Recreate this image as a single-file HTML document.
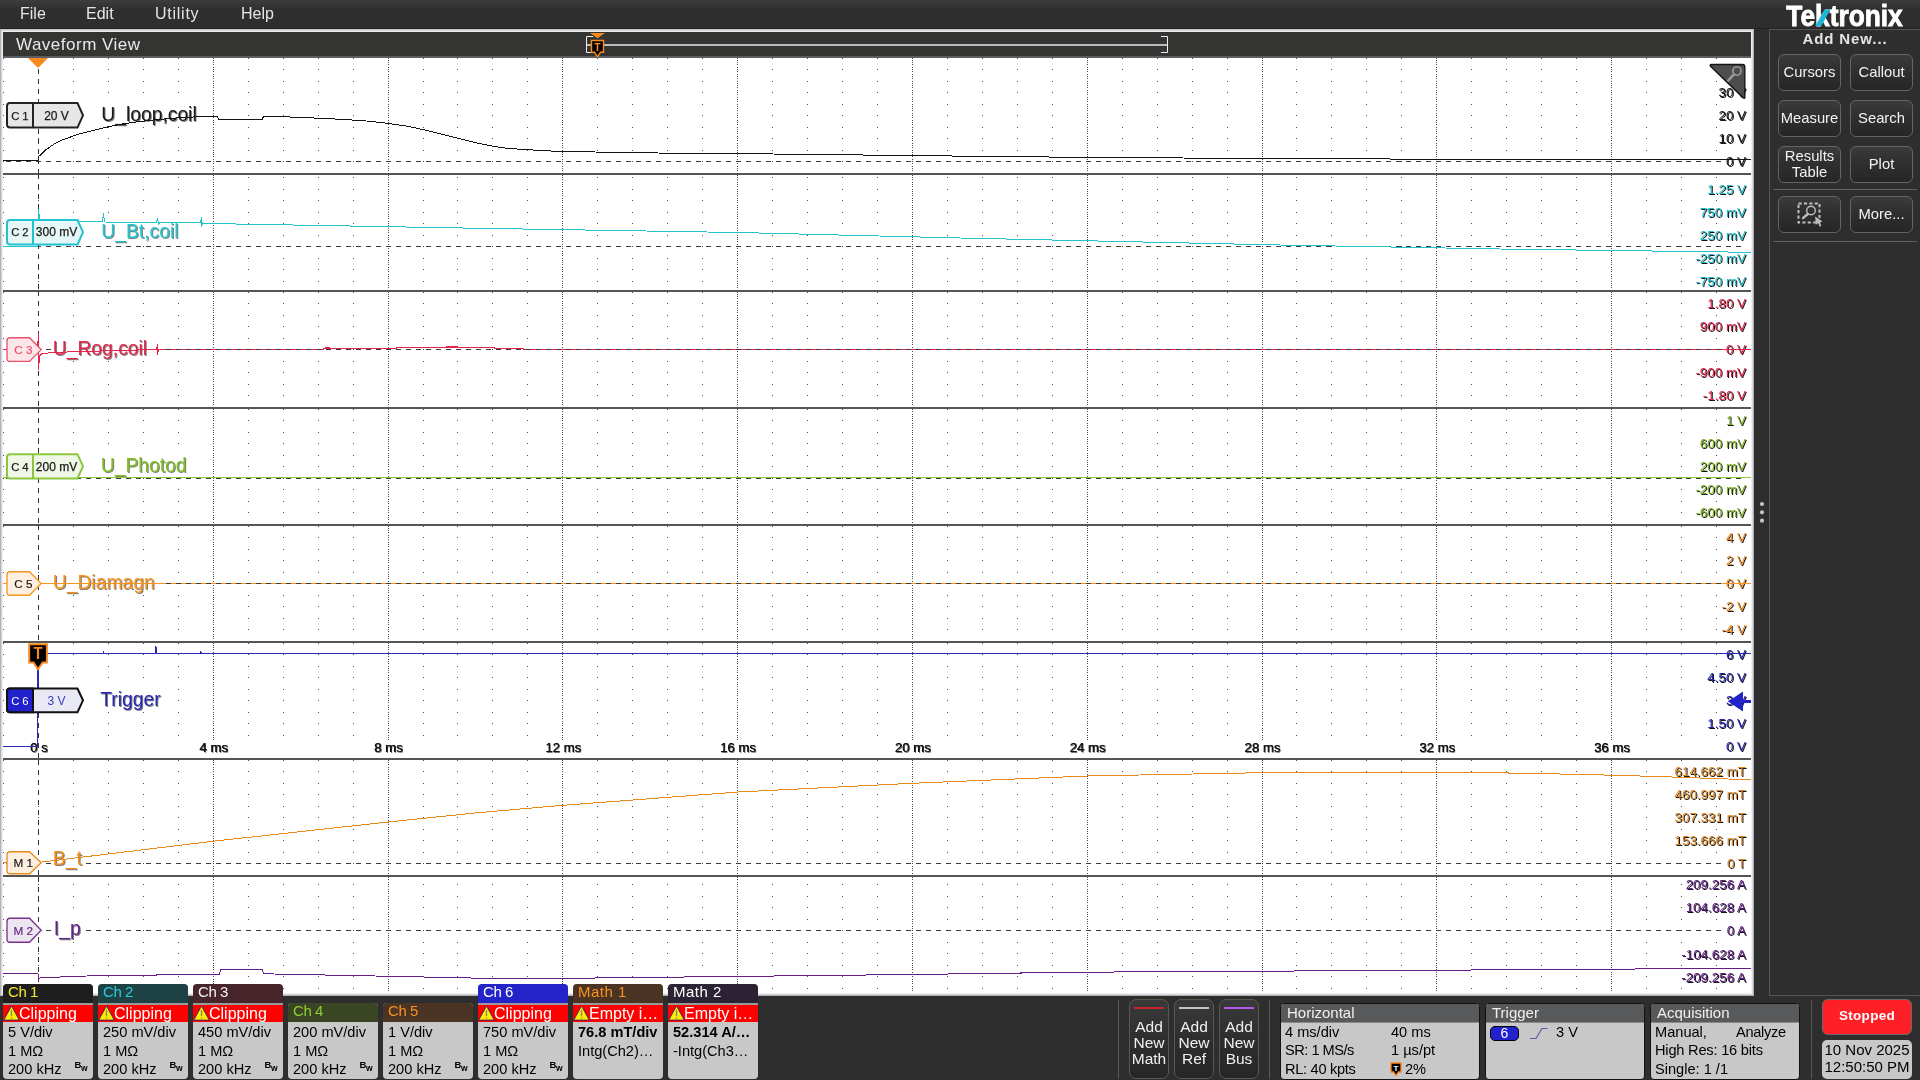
<!DOCTYPE html>
<html lang="en"><head><meta charset="utf-8"><title>Tektronix Waveform View</title>
<style>
*{box-sizing:border-box}
html,body{margin:0;padding:0}
body{width:1920px;height:1080px;overflow:hidden;background:#2e2e2e;position:relative;
 font-family:"Liberation Sans",sans-serif;color:#000}
#root{position:absolute;left:0;top:0;width:1920px;height:1080px;will-change:transform}
.abs{position:absolute}
#menubar{left:0;top:0;width:1920px;height:29px;background:linear-gradient(#3d3d3d 0,#2e2e2e 10px,#2e2e2e 28px,#222 28px)}
#menubar span{position:absolute;top:5px;font-size:16px;line-height:18px;color:#e6e6e6}
#wv{left:0;top:29px;width:1754px;height:967px;background:#fff;
 border:1px solid #b2b2b6;border-top-color:#c6c6ca;box-shadow:inset 0 0 0 1px #d8d8dc,inset 0 0 0 2px #efeff2}
#wvedge{display:none}
#title{left:3px;top:32px;width:1748px;height:26px;background:#343432;border-bottom:2px solid #5a5d61}
#title span{position:absolute;left:13px;top:3px;font-size:17px;line-height:19px;color:#e8e8e8;letter-spacing:.5px}
#side{left:1769px;top:29px;width:151px;height:967px;border:1px solid #5b5450;border-right:none}
#addnew{left:1770px;top:30px;width:150px;text-align:center;font-size:15px;line-height:18px;font-weight:bold;color:#e4e4e4;letter-spacing:.9px}
.btn{position:absolute;width:63px;height:37px;padding-bottom:1px;border:1px solid #6b625c;border-radius:6px;
 background:linear-gradient(#3b3b3b 0,#303030 40%,#262626 100%);color:#f2f2f2;font-size:14.8px;
 display:flex;align-items:center;justify-content:center;text-align:center;line-height:16px;white-space:nowrap}
.hr{position:absolute;left:1773px;width:144px;height:1px;background:#6a605a}
.vr{position:absolute;width:1px;top:1000px;height:79px;background:#5f5650}
svg{position:absolute;left:0;top:0}
.lbl{position:absolute;font-size:13.4px;line-height:14px;white-space:nowrap;text-align:right;right:174px;
 text-shadow:1px 1px 0 #151515;background:#fff;padding:0 1px 0 2px;margin-right:-1px}
.tl{position:absolute;font-size:13.2px;line-height:16px;white-space:nowrap;color:#111;transform:translateX(-50%);top:740px;padding:0 1px;
 background:#fff;text-shadow:.6px 0 0 #222,.9px .9px 0 #777}
.wl{position:absolute;font-size:19.3px;line-height:22px;white-space:nowrap;text-shadow:1px 1px 0 rgba(0,0,0,.5);background:#fff;padding:0 2px;margin-left:-2px}
/* bottom badges */
.cb{position:absolute;width:90px;border-radius:4px 4px 4px 4px;overflow:hidden;background:#c8c8c8;font-size:14.6px;line-height:18.7px}
.cb .h{height:19px;padding-left:5px;font-size:15px;line-height:16px;white-space:nowrap;letter-spacing:-.45px}
.cb .sep{height:2px;background:#9a9a9a}
.cb .w{height:17px;background:#ff0000;color:#fff;font-size:16px;line-height:17px;padding-left:16px;white-space:nowrap;position:relative}
.cb .b{padding:1px 0 0 5px;white-space:nowrap;position:relative}
.cb .bw{position:absolute;right:6px;bottom:9px;letter-spacing:-.5px;font-size:9.5px;line-height:10px;font-weight:bold}
.cb .bw sub{font-size:8.5px;vertical-align:-3px;line-height:0}
.box{position:absolute;top:1003px;height:77px;border:1px solid #111;border-radius:4px;background:#c8c8c8;overflow:hidden;font-size:14.6px;line-height:18.8px}
.box .h{height:19px;background:#58595b;color:#f0f0f0;font-size:15px;line-height:17px;padding-left:6px;border-bottom:1px solid #8a8a8a}
.box .r{position:absolute;white-space:nowrap}
.abtn{position:absolute;top:999px;width:40px;height:80px;border:1px solid #5f5650;border-radius:7px;
 background:linear-gradient(#3a3a3a 0,#2e2e2e 50%,#262626 100%);color:#f0f0f0;font-size:15.5px;line-height:16.1px;text-align:center;padding-top:19px}
.abtn i{position:absolute;left:4px;right:4px;top:7px;height:2px}
</style></head>
<body>
<div id="root">
<div class="abs" id="menubar"><span style="left:20px">File</span><span style="left:86px">Edit</span><span style="left:155px;letter-spacing:.75px">Utility</span><span style="left:241px">Help</span></div>
<div class="abs" id="wv"></div><div class="abs" id="wvedge"></div>
<div class="abs" id="title"><span>Waveform View</span></div>
<div class="abs" id="side"></div>
<div class="abs" id="addnew">Add New...</div>
<div class="btn" style="left:1778px;top:54px">Cursors</div>
<div class="btn" style="left:1850px;top:54px">Callout</div>
<div class="btn" style="left:1778px;top:100px">Measure</div>
<div class="btn" style="left:1850px;top:100px">Search</div>
<div class="btn" style="left:1778px;top:146px">Results<br>Table</div>
<div class="btn" style="left:1850px;top:146px">Plot</div>
<div class="btn" style="left:1778px;top:196px"></div>
<div class="btn" style="left:1850px;top:196px">More...</div>
<div class="hr" style="top:189px"></div><div class="hr" style="top:241px"></div>
<svg width="1920" height="1080" viewBox="0 0 1920 1080" font-family="Liberation Sans, sans-serif">
<defs>
<path id="row" d="M3 .5h1M38 .5h1M73 .5h1M108 .5h1M143 .5h1M178 .5h1M213 .5h1M248 .5h1M283 .5h1M318 .5h1M353 .5h1M388 .5h1M423 .5h1M457 .5h1M492 .5h1M527 .5h1M562 .5h1M597 .5h1M632 .5h1M667 .5h1M702 .5h1M737 .5h1M772 .5h1M807 .5h1M842 .5h1M877 .5h1M912 .5h1M947 .5h1M982 .5h1M1017 .5h1M1052 .5h1M1087 .5h1M1122 .5h1M1157 .5h1M1192 .5h1M1227 .5h1M1262 .5h1M1296 .5h1M1331 .5h1M1366 .5h1M1401 .5h1M1436 .5h1M1471 .5h1M1506 .5h1M1541 .5h1M1576 .5h1M1611 .5h1M1646 .5h1M1681 .5h1M1716 .5h1" stroke="#4a4a4a" stroke-width="1" fill="none" shape-rendering="crispEdges"/>
<path id="v0" d="M.5 58v1M.5 60v1M.5 62v1M.5 64v1M.5 67v1M.5 69v1M.5 71v1M.5 74v1M.5 76v1M.5 78v1M.5 81v1M.5 83v1M.5 85v1M.5 87v1M.5 90v1M.5 92v1M.5 94v1M.5 97v1M.5 99v1M.5 101v1M.5 104v1M.5 106v1M.5 108v1M.5 110v1M.5 113v1M.5 115v1M.5 117v1M.5 120v1M.5 122v1M.5 124v1M.5 127v1M.5 129v1M.5 131v1M.5 133v1M.5 136v1M.5 138v1M.5 140v1M.5 143v1M.5 145v1M.5 147v1M.5 150v1M.5 152v1M.5 154v1M.5 156v1M.5 159v1M.5 161v1M.5 163v1M.5 166v1M.5 168v1M.5 170v1" stroke="#4a4a4a" stroke-width="1" fill="none" shape-rendering="crispEdges"/>
<path id="v1" d="M.5 175v1M.5 177v1M.5 179v1M.5 182v1M.5 184v1M.5 186v1M.5 189v1M.5 191v1M.5 193v1M.5 195v1M.5 198v1M.5 200v1M.5 202v1M.5 205v1M.5 207v1M.5 209v1M.5 212v1M.5 214v1M.5 216v1M.5 218v1M.5 221v1M.5 223v1M.5 225v1M.5 228v1M.5 230v1M.5 232v1M.5 235v1M.5 237v1M.5 239v1M.5 241v1M.5 244v1M.5 246v1M.5 248v1M.5 251v1M.5 253v1M.5 255v1M.5 258v1M.5 260v1M.5 262v1M.5 264v1M.5 267v1M.5 269v1M.5 271v1M.5 274v1M.5 276v1M.5 278v1M.5 281v1M.5 283v1M.5 285v1M.5 287v1" stroke="#4a4a4a" stroke-width="1" fill="none" shape-rendering="crispEdges"/>
<path id="v2" d="M.5 292v1M.5 294v1M.5 296v1M.5 298v1M.5 301v1M.5 303v1M.5 305v1M.5 308v1M.5 310v1M.5 312v1M.5 315v1M.5 317v1M.5 319v1M.5 321v1M.5 324v1M.5 326v1M.5 328v1M.5 331v1M.5 333v1M.5 335v1M.5 338v1M.5 340v1M.5 342v1M.5 344v1M.5 347v1M.5 349v1M.5 351v1M.5 354v1M.5 356v1M.5 358v1M.5 361v1M.5 363v1M.5 365v1M.5 367v1M.5 370v1M.5 372v1M.5 374v1M.5 377v1M.5 379v1M.5 381v1M.5 384v1M.5 386v1M.5 388v1M.5 390v1M.5 393v1M.5 395v1M.5 397v1M.5 400v1M.5 402v1M.5 404v1" stroke="#4a4a4a" stroke-width="1" fill="none" shape-rendering="crispEdges"/>
<path id="v3" d="M.5 409v1M.5 411v1M.5 414v1M.5 416v1M.5 418v1M.5 420v1M.5 423v1M.5 425v1M.5 427v1M.5 430v1M.5 432v1M.5 434v1M.5 437v1M.5 439v1M.5 441v1M.5 443v1M.5 446v1M.5 448v1M.5 450v1M.5 453v1M.5 455v1M.5 457v1M.5 460v1M.5 462v1M.5 464v1M.5 466v1M.5 469v1M.5 471v1M.5 473v1M.5 476v1M.5 478v1M.5 480v1M.5 483v1M.5 485v1M.5 487v1M.5 489v1M.5 492v1M.5 494v1M.5 496v1M.5 499v1M.5 501v1M.5 503v1M.5 506v1M.5 508v1M.5 510v1M.5 512v1M.5 515v1M.5 517v1M.5 519v1M.5 522v1" stroke="#4a4a4a" stroke-width="1" fill="none" shape-rendering="crispEdges"/>
<path id="v4" d="M.5 526v1M.5 528v1M.5 530v1M.5 532v1M.5 535v1M.5 537v1M.5 539v1M.5 542v1M.5 544v1M.5 546v1M.5 549v1M.5 551v1M.5 553v1M.5 555v1M.5 558v1M.5 560v1M.5 562v1M.5 565v1M.5 567v1M.5 569v1M.5 572v1M.5 574v1M.5 576v1M.5 578v1M.5 581v1M.5 583v1M.5 585v1M.5 588v1M.5 590v1M.5 592v1M.5 595v1M.5 597v1M.5 599v1M.5 601v1M.5 604v1M.5 606v1M.5 608v1M.5 611v1M.5 613v1M.5 615v1M.5 618v1M.5 620v1M.5 622v1M.5 624v1M.5 627v1M.5 629v1M.5 631v1M.5 634v1M.5 636v1M.5 638v1" stroke="#4a4a4a" stroke-width="1" fill="none" shape-rendering="crispEdges"/>
<path id="v5" d="M.5 643v1M.5 645v1M.5 647v1M.5 649v1M.5 652v1M.5 654v1M.5 656v1M.5 659v1M.5 661v1M.5 663v1M.5 666v1M.5 668v1M.5 670v1M.5 672v1M.5 675v1M.5 677v1M.5 679v1M.5 682v1M.5 684v1M.5 686v1M.5 689v1M.5 691v1M.5 693v1M.5 695v1M.5 698v1M.5 700v1M.5 702v1M.5 705v1M.5 707v1M.5 709v1M.5 712v1M.5 714v1M.5 716v1M.5 718v1M.5 721v1M.5 723v1M.5 725v1M.5 728v1M.5 730v1M.5 732v1M.5 735v1M.5 737v1M.5 739v1M.5 741v1M.5 744v1M.5 746v1M.5 748v1M.5 751v1M.5 753v1M.5 755v1" stroke="#4a4a4a" stroke-width="1" fill="none" shape-rendering="crispEdges"/>
<path id="v6" d="M.5 760v1M.5 762v1M.5 764v1M.5 767v1M.5 769v1M.5 771v1M.5 774v1M.5 776v1M.5 778v1M.5 781v1M.5 783v1M.5 785v1M.5 787v1M.5 790v1M.5 792v1M.5 794v1M.5 797v1M.5 799v1M.5 801v1M.5 804v1M.5 806v1M.5 808v1M.5 810v1M.5 813v1M.5 815v1M.5 817v1M.5 820v1M.5 822v1M.5 824v1M.5 827v1M.5 829v1M.5 831v1M.5 833v1M.5 836v1M.5 838v1M.5 840v1M.5 843v1M.5 845v1M.5 847v1M.5 850v1M.5 852v1M.5 854v1M.5 856v1M.5 859v1M.5 861v1M.5 863v1M.5 866v1M.5 868v1M.5 870v1M.5 873v1" stroke="#4a4a4a" stroke-width="1" fill="none" shape-rendering="crispEdges"/>
<path id="v7" d="M.5 877v1M.5 879v1M.5 882v1M.5 884v1M.5 886v1M.5 889v1M.5 891v1M.5 893v1M.5 896v1M.5 898v1M.5 900v1M.5 902v1M.5 905v1M.5 907v1M.5 909v1M.5 912v1M.5 914v1M.5 916v1M.5 919v1M.5 921v1M.5 923v1M.5 926v1M.5 928v1M.5 930v1M.5 933v1M.5 935v1M.5 937v1M.5 939v1M.5 942v1M.5 944v1M.5 946v1M.5 949v1M.5 951v1M.5 953v1M.5 956v1M.5 958v1M.5 960v1M.5 963v1M.5 965v1M.5 967v1M.5 969v1M.5 972v1M.5 974v1M.5 976v1M.5 979v1M.5 981v1M.5 983v1M.5 986v1M.5 988v1M.5 990v1" stroke="#4a4a4a" stroke-width="1" fill="none" shape-rendering="crispEdges"/>
</defs>
<g><use href="#row" y="58"/><use href="#row" y="69"/><use href="#row" y="81"/><use href="#row" y="92"/><use href="#row" y="104"/><use href="#row" y="115"/><use href="#row" y="127"/><use href="#row" y="138"/><use href="#row" y="150"/><use href="#row" y="161"/><use href="#v0" x="213"/><use href="#v0" x="388"/><use href="#v0" x="562"/><use href="#v0" x="737"/><use href="#v0" x="912"/><use href="#v0" x="1087"/><use href="#v0" x="1262"/><use href="#v0" x="1436"/><use href="#v0" x="1611"/><use href="#row" y="177"/><use href="#row" y="189"/><use href="#row" y="200"/><use href="#row" y="212"/><use href="#row" y="223"/><use href="#row" y="235"/><use href="#row" y="246"/><use href="#row" y="258"/><use href="#row" y="269"/><use href="#row" y="281"/><use href="#v1" x="213"/><use href="#v1" x="388"/><use href="#v1" x="562"/><use href="#v1" x="737"/><use href="#v1" x="912"/><use href="#v1" x="1087"/><use href="#v1" x="1262"/><use href="#v1" x="1436"/><use href="#v1" x="1611"/><use href="#row" y="292"/><use href="#row" y="303"/><use href="#row" y="315"/><use href="#row" y="326"/><use href="#row" y="338"/><use href="#row" y="349"/><use href="#row" y="361"/><use href="#row" y="372"/><use href="#row" y="384"/><use href="#row" y="395"/><use href="#v2" x="213"/><use href="#v2" x="388"/><use href="#v2" x="562"/><use href="#v2" x="737"/><use href="#v2" x="912"/><use href="#v2" x="1087"/><use href="#v2" x="1262"/><use href="#v2" x="1436"/><use href="#v2" x="1611"/><use href="#row" y="409"/><use href="#row" y="420"/><use href="#row" y="432"/><use href="#row" y="443"/><use href="#row" y="455"/><use href="#row" y="466"/><use href="#row" y="478"/><use href="#row" y="489"/><use href="#row" y="501"/><use href="#row" y="512"/><use href="#v3" x="213"/><use href="#v3" x="388"/><use href="#v3" x="562"/><use href="#v3" x="737"/><use href="#v3" x="912"/><use href="#v3" x="1087"/><use href="#v3" x="1262"/><use href="#v3" x="1436"/><use href="#v3" x="1611"/><use href="#row" y="526"/><use href="#row" y="537"/><use href="#row" y="549"/><use href="#row" y="560"/><use href="#row" y="572"/><use href="#row" y="583"/><use href="#row" y="595"/><use href="#row" y="606"/><use href="#row" y="618"/><use href="#row" y="629"/><use href="#v4" x="213"/><use href="#v4" x="388"/><use href="#v4" x="562"/><use href="#v4" x="737"/><use href="#v4" x="912"/><use href="#v4" x="1087"/><use href="#v4" x="1262"/><use href="#v4" x="1436"/><use href="#v4" x="1611"/><use href="#row" y="643"/><use href="#row" y="654"/><use href="#row" y="666"/><use href="#row" y="677"/><use href="#row" y="689"/><use href="#row" y="700"/><use href="#row" y="712"/><use href="#row" y="723"/><use href="#row" y="735"/><use href="#v5" x="213"/><use href="#v5" x="388"/><use href="#v5" x="562"/><use href="#v5" x="737"/><use href="#v5" x="912"/><use href="#v5" x="1087"/><use href="#v5" x="1262"/><use href="#v5" x="1436"/><use href="#v5" x="1611"/><use href="#row" y="760"/><use href="#row" y="771"/><use href="#row" y="783"/><use href="#row" y="794"/><use href="#row" y="806"/><use href="#row" y="817"/><use href="#row" y="829"/><use href="#row" y="840"/><use href="#row" y="852"/><use href="#row" y="863"/><use href="#v6" x="213"/><use href="#v6" x="388"/><use href="#v6" x="562"/><use href="#v6" x="737"/><use href="#v6" x="912"/><use href="#v6" x="1087"/><use href="#v6" x="1262"/><use href="#v6" x="1436"/><use href="#v6" x="1611"/><use href="#row" y="884"/><use href="#row" y="896"/><use href="#row" y="907"/><use href="#row" y="919"/><use href="#row" y="930"/><use href="#row" y="942"/><use href="#row" y="953"/><use href="#row" y="965"/><use href="#row" y="976"/><use href="#row" y="988"/><use href="#v7" x="213"/><use href="#v7" x="388"/><use href="#v7" x="562"/><use href="#v7" x="737"/><use href="#v7" x="912"/><use href="#v7" x="1087"/><use href="#v7" x="1262"/><use href="#v7" x="1436"/><use href="#v7" x="1611"/></g>
<rect x="3" y="173" width="1748" height="2" fill="#555" shape-rendering="crispEdges"/>
<rect x="3" y="290" width="1748" height="2" fill="#555" shape-rendering="crispEdges"/>
<rect x="3" y="407" width="1748" height="2" fill="#555" shape-rendering="crispEdges"/>
<rect x="3" y="524" width="1748" height="2" fill="#555" shape-rendering="crispEdges"/>
<rect x="3" y="641" width="1748" height="2" fill="#555" shape-rendering="crispEdges"/>
<rect x="3" y="758" width="1748" height="2" fill="#555" shape-rendering="crispEdges"/>
<rect x="3" y="875" width="1748" height="2" fill="#555" shape-rendering="crispEdges"/>
<path d="M6 161.5H1721" stroke="#3a3a3a" stroke-width="1" stroke-dasharray="5 5" fill="none" shape-rendering="crispEdges"/>
<path d="M6 246.5H1741" stroke="#3a3a3a" stroke-width="1" stroke-dasharray="5 5" fill="none" shape-rendering="crispEdges"/>
<path d="M6 349.5H1721" stroke="#3a3a3a" stroke-width="1" stroke-dasharray="5 5" fill="none" shape-rendering="crispEdges"/>
<path d="M6 478.5H1741" stroke="#3a3a3a" stroke-width="1" stroke-dasharray="5 5" fill="none" shape-rendering="crispEdges"/>
<path d="M6 583.5H1721" stroke="#3a3a3a" stroke-width="1" stroke-dasharray="5 5" fill="none" shape-rendering="crispEdges"/>
<path d="M6 863.5H1721" stroke="#3a3a3a" stroke-width="1" stroke-dasharray="5 5" fill="none" shape-rendering="crispEdges"/>
<path d="M6 930.5H1721" stroke="#3a3a3a" stroke-width="1" stroke-dasharray="5 5" fill="none" shape-rendering="crispEdges"/>
<path d="M38.5 69V173" stroke="#333" stroke-width="1" stroke-dasharray="5 5" fill="none" shape-rendering="crispEdges"/>
<path d="M38.5 174V290" stroke="#333" stroke-width="1" stroke-dasharray="5 5" fill="none" shape-rendering="crispEdges"/>
<path d="M38.5 291V407" stroke="#333" stroke-width="1" stroke-dasharray="5 5" fill="none" shape-rendering="crispEdges"/>
<path d="M38.5 408V524" stroke="#333" stroke-width="1" stroke-dasharray="5 5" fill="none" shape-rendering="crispEdges"/>
<path d="M38.5 525.4V641" stroke="#333" stroke-width="1" stroke-dasharray="5 5" fill="none" shape-rendering="crispEdges"/>
<path d="M38.5 642.5V758" stroke="#333" stroke-width="1" stroke-dasharray="5 5" fill="none" shape-rendering="crispEdges"/>
<path d="M38.5 759.6V875" stroke="#333" stroke-width="1" stroke-dasharray="5 5" fill="none" shape-rendering="crispEdges"/>
<path d="M38.5 876.7V983" stroke="#333" stroke-width="1" stroke-dasharray="5 5" fill="none" shape-rendering="crispEdges"/>
<g fill="none" stroke="#bdbdbd"><rect x="1798.5" y="203.5" width="21" height="19" stroke-width="2" stroke-dasharray="3.2 2.2"/><circle cx="1811" cy="210.5" r="4.3" stroke-width="1.4"/><path d="M1807.8 214L1803 218.2" stroke-width="2.4" stroke-linecap="round"/></g>
<path d="M1815.2 216.6L1822.6 221.4L1819.6 222.2L1821.4 226L1819.8 226.7L1818 222.9L1815.8 224.9Z" fill="#bdbdbd"/>
<text x="1786.3" y="26" font-size="30.4" font-weight="bold" fill="#fff" stroke="#fff" stroke-width=".9" textLength="116.4" lengthAdjust="spacingAndGlyphs">Tektronix</text>
<path d="M1815.2 26L1824.7 9.5H1830.4L1821.3 26Z" fill="#1cb7d8"/>
</svg>
<div class="lbl" style="top:86px;color:#1c1c1c">30 V</div>
<div class="lbl" style="top:109px;color:#1c1c1c">20 V</div>
<div class="lbl" style="top:132px;color:#1c1c1c">10 V</div>
<div class="lbl" style="top:155px;color:#1c1c1c">0 V</div>
<div class="lbl" style="top:183px;color:#20bcc8">1.25 V</div>
<div class="lbl" style="top:206px;color:#20bcc8">750 mV</div>
<div class="lbl" style="top:229px;color:#20bcc8">250 mV</div>
<div class="lbl" style="top:252px;color:#20bcc8">-250 mV</div>
<div class="lbl" style="top:275px;color:#20bcc8">-750 mV</div>
<div class="lbl" style="top:297px;color:#e3264c">1.80 V</div>
<div class="lbl" style="top:320px;color:#e3264c">900 mV</div>
<div class="lbl" style="top:343px;color:#e3264c">0 V</div>
<div class="lbl" style="top:366px;color:#e3264c">-900 mV</div>
<div class="lbl" style="top:389px;color:#e3264c">-1.80 V</div>
<div class="lbl" style="top:414px;color:#7db320">1 V</div>
<div class="lbl" style="top:437px;color:#7db320">600 mV</div>
<div class="lbl" style="top:460px;color:#7db320">200 mV</div>
<div class="lbl" style="top:483px;color:#7db320">-200 mV</div>
<div class="lbl" style="top:506px;color:#7db320">-600 mV</div>
<div class="lbl" style="top:531px;color:#f08c1c">4 V</div>
<div class="lbl" style="top:554px;color:#f08c1c">2 V</div>
<div class="lbl" style="top:577px;color:#f08c1c">0 V</div>
<div class="lbl" style="top:600px;color:#f08c1c">-2 V</div>
<div class="lbl" style="top:623px;color:#f08c1c">-4 V</div>
<div class="lbl" style="top:648px;color:#2626b0">6 V</div>
<div class="lbl" style="top:671px;color:#2626b0">4.50 V</div>
<div class="lbl" style="top:694px;color:#2626b0">3 V</div>
<div class="lbl" style="top:717px;color:#2626b0">1.50 V</div>
<div class="lbl" style="top:740px;color:#2626b0">0 V</div>
<div class="lbl" style="top:765px;color:#dd8520">614.662 mT</div>
<div class="lbl" style="top:788px;color:#dd8520">460.997 mT</div>
<div class="lbl" style="top:811px;color:#dd8520">307.331 mT</div>
<div class="lbl" style="top:834px;color:#dd8520">153.666 mT</div>
<div class="lbl" style="top:857px;color:#dd8520">0 T</div>
<div class="lbl" style="top:878px;color:#64208a">209.256 A</div>
<div class="lbl" style="top:901px;color:#64208a">104.628 A</div>
<div class="lbl" style="top:924px;color:#64208a">0 A</div>
<div class="lbl" style="top:948px;color:#64208a">-104.628 A</div>
<div class="lbl" style="top:971px;color:#64208a">-209.256 A</div>
<div class="tl" style="left:38.8px;background:none">0 s</div>
<div class="tl" style="left:213.6px">4 ms</div>
<div class="tl" style="left:388.4px">8 ms</div>
<div class="tl" style="left:563.1px">12 ms</div>
<div class="tl" style="left:737.9px">16 ms</div>
<div class="tl" style="left:912.7px">20 ms</div>
<div class="tl" style="left:1087.5px">24 ms</div>
<div class="tl" style="left:1262.3px">28 ms</div>
<div class="tl" style="left:1437.1px">32 ms</div>
<div class="tl" style="left:1611.9px">36 ms</div>
<div class="wl" style="left:101.3px;top:103.9px;color:#1a1a1a">U_loop,coil</div>
<div class="wl" style="left:101.3px;top:220.6px;color:#22c5d0">U_Bt,coil</div>
<div class="wl" style="left:52.8px;top:337.6px;color:#e3264c">U_Rog,coil</div>
<div class="wl" style="left:100.8px;top:455.1px;color:#80bf20">U_Photod</div>
<div class="wl" style="left:52.8px;top:572.1px;color:#f5921e">U_Diamagn</div>
<div class="wl" style="left:100.3px;top:688.6px;color:#2626b0">Trigger</div>
<div class="wl" style="left:52.8px;top:848.1px;color:#f08c1c">B_t</div>
<div class="wl" style="left:53.8px;top:918.2px;color:#64208a">I_p</div>
<svg width="1920" height="1080" viewBox="0 0 1920 1080" font-family="Liberation Sans, sans-serif">
<polyline points="3,160.5 38,160.5 38.5,157 39,156.3 45.6,150 53.4,144.5 61.3,140.3 76.9,134.7 92.5,130.5 108,126.9 123.75,123.75 139.4,121.6 155,119.8 170.6,118.4 186.25,117.3 201.9,116.6 212.8,116.1 217.5,116.1 218.5,119.5 262,119.5 263.6,116.4 290,117 320,118.25 345,119.5 370,121.25 388.75,123.5 407.5,126.25 425,130 445,135 460,138.75 475,142.5 490,145.75 505,148 520,149.25 545,150.75 562.5,151.5 595,152 657.5,153 745,153.75 800,154.25 912,155.6 1087,157.4 1262,158.5 1437,159.2 1751,159.8" fill="none" stroke="#141414" stroke-width="1" shape-rendering="crispEdges" />
<polyline points="3,246.5 37.5,246.5 38.5,209 39.5,219 41,221 102.5,221.5 103.5,213 104.5,222 156.5,222.5 157.5,218 158.5,224 160,222.6 200.5,223 201.5,217 201.5,227 202.5,223 213,223.6 480,228.3 738,232.5 960,238 1280,245 1500,249 1751,252.3" fill="none" stroke="#22c3cf" stroke-width="1" shape-rendering="crispEdges" />
<polyline points="3,349.5 37.5,349.5 38.5,333 38.5,370 39.5,356 42,353.5 55,352.5 80,351.5 120,350.5 156.5,349.5 157.5,344 157.5,355 158.5,349.5 323,349.5 323,348.5 396,348.5 396,347.5 494,347.5 494,348.5 523,348.5 523,349.5 1751,349.5" fill="none" stroke="#e3264c" stroke-width="1" shape-rendering="crispEdges" />
<rect x="325" y="347" width="5" height="1" fill="#e3264c"/>
<rect x="446" y="346" width="12" height="1" fill="#e3264c"/>
<polyline points="3,477.5 1751,477.5" fill="none" stroke="#8cc63f" stroke-width="1" shape-rendering="crispEdges" />
<polyline points="3,583.5 1751,583.5" fill="none" stroke="#f7941d" stroke-width="1" shape-rendering="crispEdges" />
<polyline points="3,746.5 37.5,746.5 37.5,653.5 103.5,653.5 103.5,651 103.5,653.5 155.5,653.5 155.5,646 156.5,649 157,653.5 200.5,653.5 200.5,651.5 201.5,653.5 1751,653.5" fill="none" stroke="#2a2ab8" stroke-width="1" shape-rendering="crispEdges" />
<polyline points="3,862.5 38,862.5 213,841.25 388,822 480,812.5 563,805.3 738,792 912,783.3 1087,776 1262,772.7 1350,772.2 1437,772.2 1525,773.2 1612,775.2 1660,776.6 1700,778 1751,779.8" fill="none" stroke="#e8891c" stroke-width="1" shape-rendering="crispEdges" />
<polyline points="3,973.5 38,973.5 38.5,980 40,978 60,977 100,975.5 213,974.5 219,974.5 221,969.5 262,969.5 264,973.8 350,975.5 400,976.5 480,978.2 560,978.4 738,976.4 912,974.5 1080,972.2 1440,970.2 1751,968.3" fill="none" stroke="#6a1b8a" stroke-width="1" shape-rendering="crispEdges" />
<path d="M166 349.5H1721" stroke="#3a3a3a" stroke-width="1" stroke-dasharray="5 5" fill="none" shape-rendering="crispEdges"/>
<path d="M166 583.5H1721" stroke="#3a3a3a" stroke-width="1" stroke-dasharray="5 5" fill="none" shape-rendering="crispEdges"/>
<path d="M38.5 669V700M37.5 700V747" stroke="#2a2ab8" stroke-width="1" fill="none" shape-rendering="crispEdges"/>
<path d="M28 58H48L38 68Z" fill="#f7891e"/>
<path d="M593 36.5H586.5V52.5H593M1161 36.5H1167.5V52.5H1161" stroke="#f0f0f0" stroke-width="1" fill="none"/>
<rect x="587" y="44" width="580" height="2" fill="#b9b9b9"/>
<path d="M590 33H605L597.5 38.2Z" fill="#f7891e"/>
<path d="M591.5 40.5H603.5V52.3H600.5L597.5 56.8L594.5 52.3H591.5Z" fill="#000" stroke="#f7891e" stroke-width="1.4"/>
<text x="597.5" y="50.6" font-size="10.5" font-weight="bold" fill="#f7891e" text-anchor="middle">T</text>
<path d="M1711.5 64.5H1742.5Q1744.8 64.5 1744.8 67V97.2Q1744.8 99 1743 97.6L1710.6 66.3Q1709.4 64.5 1711.5 64.5Z" fill="#4d4d4d" stroke="#151515" stroke-width="1.4"/>
<circle cx="1737" cy="71" r="4.1" fill="none" stroke="#a9a9a9" stroke-width="1.4"/>
<path d="M1733.6 74.6L1728.2 80.6" stroke="#9a9a9a" stroke-width="2.4" stroke-linecap="round"/>
<path d="M1728 701.5L1743 691.5V700H1751V703H1743V711.5Z" fill="#2222cc"/>
<path d="M29.2 644.3H46.9V662.5H42.6L38 669.2L33.5 662.5H29.2Z" fill="#000" stroke="#f7891e" stroke-width="2"/>
<text x="37.9" y="658.8" font-size="16" font-weight="bold" fill="#f7891e" text-anchor="middle" textLength="9" lengthAdjust="spacingAndGlyphs">T</text>
<circle cx="1762" cy="504" r="2.1" fill="#c4c4c4"/>
<circle cx="1762" cy="512.3" r="2.1" fill="#c4c4c4"/>
<circle cx="1762" cy="520.7" r="2.1" fill="#c4c4c4"/>
<path d="M10 103H77.5L83 115.3L77.5 127.6H10Q7 127.6 7 124.6V106Q7 103 10 103Z" fill="#e6e6e6" stroke="#222" stroke-width="2"/>
<path d="M33 103V127.6" stroke="#222" stroke-width="2"/>
<text x="19.8" y="119.5" font-size="11.3" fill="#1a1a1a" stroke="#1a1a1a" stroke-width="0.25" text-anchor="middle" letter-spacing="-.2">C 1</text>
<text x="56.5" y="119.5" font-size="12" fill="#1a1a1a" stroke="#1a1a1a" stroke-width="0.25" text-anchor="middle">20 V</text>
<path d="M10 220H77.5L83 232.2L77.5 244.4H10Q7 244.4 7 241.4V223Q7 220 10 220Z" fill="#e6f7f8" stroke="#22c3cf" stroke-width="2"/>
<path d="M33 220V244.4" stroke="#22c3cf" stroke-width="2"/>
<text x="19.8" y="236.4" font-size="11.3" fill="#1a1a1a" stroke="#1a1a1a" stroke-width="0.25" text-anchor="middle" letter-spacing="-.2">C 2</text>
<text x="56.5" y="236.4" font-size="12" fill="#1a1a1a" stroke="#1a1a1a" stroke-width="0.25" text-anchor="middle">300 mV</text>
<path d="M10 454.2H77.5L83 466.35L77.5 478.5H10Q7 478.5 7 475.5V457.2Q7 454.2 10 454.2Z" fill="#f1f7e6" stroke="#8cc63f" stroke-width="2"/>
<path d="M33 454.2V478.5" stroke="#8cc63f" stroke-width="2"/>
<text x="19.8" y="470.55" font-size="11.3" fill="#1a1a1a" stroke="#1a1a1a" stroke-width="0.25" text-anchor="middle" letter-spacing="-.2">C 4</text>
<text x="56.5" y="470.55" font-size="12" fill="#1a1a1a" stroke="#1a1a1a" stroke-width="0.25" text-anchor="middle">200 mV</text>
<path d="M10 688.5H77.5L83 700.35L77.5 712.2H10Q7 712.2 7 709.2V691.5Q7 688.5 10 688.5Z" fill="#e9e9f6" stroke="#111" stroke-width="2"/>
<path d="M10 688.5H33V712.2H10Q7 712.2 7 709.2V691.5Q7 688.5 10 688.5Z" fill="#2222cc" stroke="#111" stroke-width="2"/>
<path d="M33 688.5V712.2" stroke="#111" stroke-width="2"/>
<text x="19.8" y="704.55" font-size="11.3" fill="#fff" stroke="#fff" stroke-width="0" text-anchor="middle" letter-spacing="-.2">C 6</text>
<text x="56.5" y="704.55" font-size="12" fill="#3a3ac0" stroke="#3a3ac0" stroke-width="0" text-anchor="middle">3 V</text>
<path d="M10 337.75H29.5L41.2 349.6L29.5 361.45H10Q7 361.45 7 358.45V340.75Q7 337.75 10 337.75Z" fill="#fde6ea" stroke="#e8506a" stroke-width="1.3"/>
<text x="23.3" y="353.9" font-size="11.7" fill="#e8506a" stroke="#e8506a" stroke-width=".2" text-anchor="middle">C 3</text>
<path d="M10 571.75H29.5L41.2 583.5L29.5 595.25H10Q7 595.25 7 592.25V574.75Q7 571.75 10 571.75Z" fill="#fef0e0" stroke="#f7941d" stroke-width="1.3"/>
<text x="23.3" y="587.8" font-size="11.7" fill="#1a1a1a" stroke="#1a1a1a" stroke-width=".2" text-anchor="middle">C 5</text>
<path d="M10 851.75H29.5L41.2 862.75L29.5 873.75H10Q7 873.75 7 870.75V854.75Q7 851.75 10 851.75Z" fill="#fef0e0" stroke="#e8891c" stroke-width="1.3"/>
<text x="23.3" y="867.05" font-size="11.7" fill="#1a1a1a" stroke="#1a1a1a" stroke-width=".2" text-anchor="middle">M 1</text>
<path d="M10 918.25H29.5L41.2 930.25L29.5 942.25H10Q7 942.25 7 939.25V921.25Q7 918.25 10 918.25Z" fill="#ece6f0" stroke="#7b2d90" stroke-width="1.3"/>
<text x="23.3" y="934.55" font-size="11.7" fill="#6a2a86" stroke="#6a2a86" stroke-width=".2" text-anchor="middle">M 2</text>
</svg>
<div class="cb" style="left:3px;top:984px;height:95px"><div class="h" style="background:#1e1e1e;color:#f5e932">Ch 1</div><div class="sep"></div><div class="w"><svg style="left:0;top:0" width="17" height="16" viewBox="0 0 16 15"><path d="M8 .8L15.3 14.2H.7Z" fill="#ffee00" stroke="#3a2a6a" stroke-width=".9" stroke-linejoin="round"/><path d="M8 4.6V10.6M8 11.8V13" stroke="#8a8a70" stroke-width="1.3"/></svg>Clipping</div><div class="b">5 V/div<br>1 M&#937;<br>200 kHz<span class="bw">B<sub>w</sub></span></div></div>
<div class="cb" style="left:98px;top:984px;height:95px"><div class="h" style="background:#1e4144;color:#2ecbe0">Ch 2</div><div class="sep"></div><div class="w"><svg style="left:0;top:0" width="17" height="16" viewBox="0 0 16 15"><path d="M8 .8L15.3 14.2H.7Z" fill="#ffee00" stroke="#3a2a6a" stroke-width=".9" stroke-linejoin="round"/><path d="M8 4.6V10.6M8 11.8V13" stroke="#8a8a70" stroke-width="1.3"/></svg>Clipping</div><div class="b">250 mV/div<br>1 M&#937;<br>200 kHz<span class="bw">B<sub>w</sub></span></div></div>
<div class="cb" style="left:193px;top:984px;height:95px"><div class="h" style="background:#48252b;color:#f4f4f4">Ch 3</div><div class="sep"></div><div class="w"><svg style="left:0;top:0" width="17" height="16" viewBox="0 0 16 15"><path d="M8 .8L15.3 14.2H.7Z" fill="#ffee00" stroke="#3a2a6a" stroke-width=".9" stroke-linejoin="round"/><path d="M8 4.6V10.6M8 11.8V13" stroke="#8a8a70" stroke-width="1.3"/></svg>Clipping</div><div class="b">450 mV/div<br>1 M&#937;<br>200 kHz<span class="bw">B<sub>w</sub></span></div></div>
<div class="cb" style="left:288px;top:1003px;height:76px"><div class="h" style="background:#3a4524;color:#8ccf30">Ch 4</div><div class="b">200 mV/div<br>1 M&#937;<br>200 kHz<span class="bw">B<sub>w</sub></span></div></div>
<div class="cb" style="left:383px;top:1003px;height:76px"><div class="h" style="background:#4b3423;color:#f7941d">Ch 5</div><div class="b">1 V/div<br>1 M&#937;<br>200 kHz<span class="bw">B<sub>w</sub></span></div></div>
<div class="cb" style="left:478px;top:984px;height:95px"><div class="h" style="background:#2323c8;color:#ffffff">Ch 6</div><div class="sep"></div><div class="w"><svg style="left:0;top:0" width="17" height="16" viewBox="0 0 16 15"><path d="M8 .8L15.3 14.2H.7Z" fill="#ffee00" stroke="#3a2a6a" stroke-width=".9" stroke-linejoin="round"/><path d="M8 4.6V10.6M8 11.8V13" stroke="#8a8a70" stroke-width="1.3"/></svg>Clipping</div><div class="b">750 mV/div<br>1 M&#937;<br>200 kHz<span class="bw">B<sub>w</sub></span></div></div>
<div class="cb" style="left:573px;top:984px;height:95px"><div class="h" style="background:#4b3423;color:#f7941d;letter-spacing:.5px">Math 1</div><div class="sep"></div><div class="w"><svg style="left:0;top:0" width="17" height="16" viewBox="0 0 16 15"><path d="M8 .8L15.3 14.2H.7Z" fill="#ffee00" stroke="#3a2a6a" stroke-width=".9" stroke-linejoin="round"/><path d="M8 4.6V10.6M8 11.8V13" stroke="#8a8a70" stroke-width="1.3"/></svg>Empty i&#8230;</div><div class="b"><b>76.8 mT/div</b><br>Intg(Ch2)&#8230;<br>&nbsp;</div></div>
<div class="cb" style="left:668px;top:984px;height:95px"><div class="h" style="background:#2b2233;color:#ffffff;letter-spacing:.5px">Math 2</div><div class="sep"></div><div class="w"><svg style="left:0;top:0" width="17" height="16" viewBox="0 0 16 15"><path d="M8 .8L15.3 14.2H.7Z" fill="#ffee00" stroke="#3a2a6a" stroke-width=".9" stroke-linejoin="round"/><path d="M8 4.6V10.6M8 11.8V13" stroke="#8a8a70" stroke-width="1.3"/></svg>Empty i&#8230;</div><div class="b"><b>52.314 A/&#8230;</b><br>-Intg(Ch3&#8230;<br>&nbsp;</div></div>
<div class="vr" style="left:1118px"></div><div class="vr" style="left:1269px"></div><div class="vr" style="left:1811px"></div>
<div class="abtn" style="left:1129px"><i style="background:#c8242b"></i>Add<br>New<br>Math</div>
<div class="abtn" style="left:1174px"><i style="background:#c2c2cc"></i>Add<br>New<br>Ref</div>
<div class="abtn" style="left:1219px"><i style="background:#b455e6"></i>Add<br>New<br>Bus</div>
<div class="box" style="left:1280px;width:200px"><div class="h">Horizontal</div><div class="r" style="left:4px;top:18.6px">4 ms/div</div><div class="r" style="left:110px;top:18.6px">40 ms</div><div class="r" style="left:4px;top:37.4px;letter-spacing:-.5px">SR: 1 MS/s</div><div class="r" style="left:110px;top:37.4px">1 &#181;s/pt</div><div class="r" style="left:4px;top:56.4px;letter-spacing:-.3px">RL: 40 kpts</div><div class="r" style="left:124px;top:56.4px">2%</div><svg style="left:109px;top:58px" width="12" height="15" viewBox="0 0 12 15"><path d="M1 1H11V10H8.5L6 13.6L3.5 10H1Z" fill="#000" stroke="#f7891e" stroke-width="1.3"/><text x="6" y="8.6" font-size="8" font-weight="bold" fill="#fff" text-anchor="middle" font-family="Liberation Sans, sans-serif">T</text></svg></div>
<div class="box" style="left:1485px;width:160px"><div class="h">Trigger</div><div class="r" style="left:4px;top:22px;width:29px;height:15px;border:1px solid #000;border-radius:5px;background:#2222cc;color:#fff;text-align:center;line-height:13px;font-size:14px">6</div><svg style="left:42px;top:22px" width="22" height="15" viewBox="0 0 22 15"><path d="M2 12.5H8L14 2.5H19.5" fill="none" stroke="#5a5aa8" stroke-width="1.2"/></svg><div class="r" style="left:70px;top:18.6px">3 V</div></div>
<div class="box" style="left:1650px;width:150px"><div class="h">Acquisition</div><div class="r" style="left:4px;top:18.6px">Manual,</div><div class="r" style="left:85px;top:18.6px;letter-spacing:-.3px">Analyze</div><div class="r" style="left:4px;top:37.4px;letter-spacing:-.2px">High Res: 16 bits</div><div class="r" style="left:4px;top:56.4px">Single: 1 /1</div></div>
<div class="abs" style="left:1822px;top:999px;width:90px;height:36px;border:1px solid #6a6a6a;border-radius:6px;background:#ff1f26;color:#fff;font-weight:bold;font-size:13.5px;line-height:32px;text-align:center;letter-spacing:.3px">Stopped</div>
<div class="abs" style="left:1822px;top:1040px;width:90px;height:39px;border-radius:5px;background:#c8c8c8;font-size:15px;line-height:17px;text-align:center;padding-top:1px;white-space:nowrap">10 Nov 2025<br>12:50:50 PM</div>
</div>
</body></html>
